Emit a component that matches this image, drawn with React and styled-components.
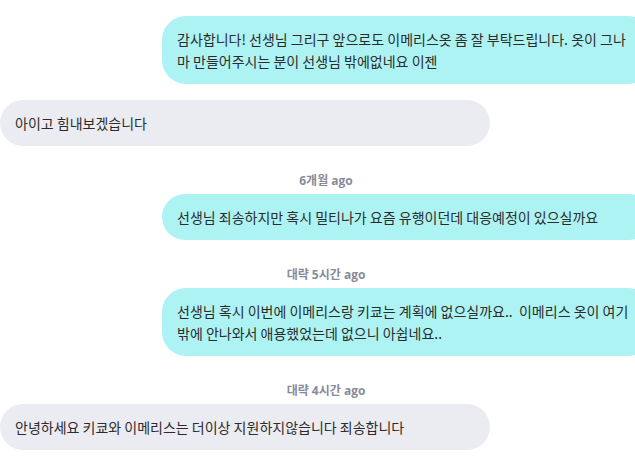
import styled, { createGlobalStyle } from "styled-components";

const GlobalStyle = createGlobalStyle`
  body {
    margin: 0;
    background: #ffffff;
    overflow: hidden;
    font-family: "Noto Sans CJK KR", "Noto Sans", sans-serif;
  }
`;

const messages = [
  {
    mine: true,
    text: "감사합니다! 선생님 그리구 앞으로도 이메리스옷 좀 잘 부탁드립니다. 옷이 그나마 만들어주시는 분이 선생님 밖에없네요 이젠",
  },
  { mine: false, text: "아이고 힘내보겠습니다" },
  {
    mine: true,
    time: "6개월 ago",
    text: "선생님 죄송하지만 혹시 밀티나가 요즘 유행이던데 대응예정이 있으실까요",
  },
  {
    mine: true,
    time: "대략 5시간 ago",
    text: "선생님 혹시 이번에 이메리스랑 키쿄는 계획에 없으실까요..  이메리스 옷이 여기밖에 안나와서 애용했었는데 없으니 아쉽네요..",
  },
  {
    mine: false,
    time: "대략 4시간 ago",
    text: "안녕하세요 키쿄와 이메리스는 더이상 지원하지않습니다 죄송합니다",
  },
];

const App = () => {
  return (
    <>
      <GlobalStyle />
      <Thread>
        {messages.map((msg, i) => (
          <Message key={i}>
            {msg.time && <Time>{msg.time}</Time>}
            <Bubble mine={msg.mine}>{msg.text}</Bubble>
          </Message>
        ))}
      </Thread>
    </>
  );
};

export default App;

const Thread = styled.div`
  width: 652px;
  padding-top: 16px;
  display: flex;
  flex-direction: column;
  gap: 16px;
`;

const Message = styled.div`
  display: flex;
  flex-direction: column;
`;

const Time = styled.div`
  text-align: center;
  font-family: "Open Sans", "Noto Sans CJK KR", sans-serif;
  font-size: 12px;
  font-weight: 700;
  line-height: 16px;
  color: #878b98;
  padding: 11px 0 5px;
`;

const Bubble = styled.div`
  box-sizing: border-box;
  width: 490px;
  align-self: ${({ mine }) => (mine ? "flex-end" : "flex-start")};
  background: ${({ mine }) => (mine ? "#aef3f3" : "#ebecf1")};
  color: #2b2b2b;
  border-radius: 24px;
  padding: 12px 15px;
  font-size: 14px;
  line-height: 22px;
  white-space: pre-wrap;
`;
